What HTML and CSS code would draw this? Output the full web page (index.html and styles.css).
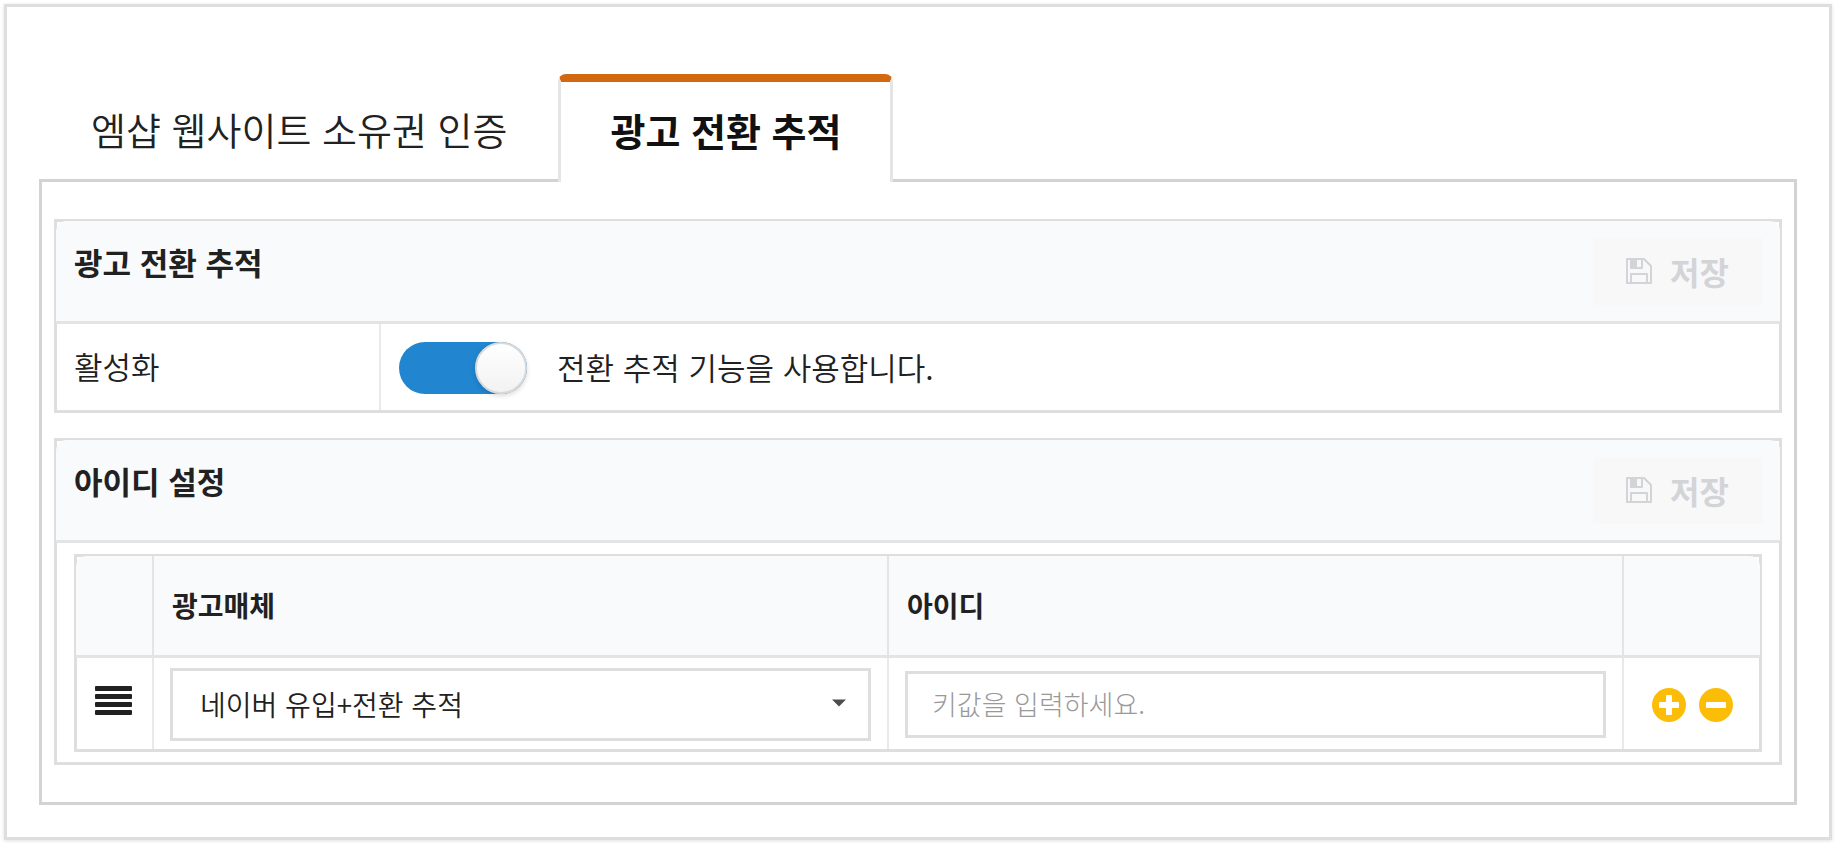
FILE: index.html
```
<!DOCTYPE html>
<html lang="ko">
<head>
    <meta charset="UTF-8">
    <meta name="viewport" content="width=device-width, initial-scale=1.0">
    <title>광고 전환 추적</title>
    <link rel="stylesheet" href="styles.css">
</head>
<body>
    <main class="card">
        <nav class="tabs">
            <a class="tab" href="#site">엠샵 웹사이트 소유권 인증</a>
            <a class="tab active" href="#tracking">광고 전환 추적</a>
        </nav>

        <div class="panel" id="tracking">
            <section class="section">
                <div class="section-head">
                    <h2>광고 전환 추적</h2>
                    <button class="save" type="button" disabled>
                        <svg class="save-icon" viewBox="0 0 26 26" fill="none" stroke="currentColor" stroke-width="2" stroke-linejoin="round">
                            <path d="M1 1H18L25 8V25H1Z"/>
                            <path d="M5 25V16H21V25"/>
                            <path d="M5 1V10H16V1"/>
                            <path d="M5 1H11V10H5Z" fill="currentColor" stroke="none"/>
                        </svg>
                        저장
                    </button>
                </div>
                <div class="field">
                    <label class="field-name" for="enabled">활성화</label>
                    <div class="field-value">
                        <input class="toggle" type="checkbox" id="enabled" checked>
                        <label for="enabled">전환 추적 기능을 사용합니다.</label>
                    </div>
                </div>
            </section>

            <section class="section">
                <div class="section-head">
                    <h2>아이디 설정</h2>
                    <button class="save" type="button" disabled>
                        <svg class="save-icon" viewBox="0 0 26 26" fill="none" stroke="currentColor" stroke-width="2" stroke-linejoin="round">
                            <path d="M1 1H18L25 8V25H1Z"/>
                            <path d="M5 25V16H21V25"/>
                            <path d="M5 1V10H16V1"/>
                            <path d="M5 1H11V10H5Z" fill="currentColor" stroke="none"/>
                        </svg>
                        저장
                    </button>
                </div>
                <div class="section-body">
                    <div class="table-box">
                        <table class="id-table">
                            <thead>
                                <tr>
                                    <th class="col-sort"></th>
                                    <th id="media-label">광고매체</th>
                                    <th id="id-label">아이디</th>
                                    <th class="col-action"></th>
                                </tr>
                            </thead>
                            <tbody>
                                <tr>
                                    <td class="col-sort">
                                        <svg class="sort-icon" viewBox="0 0 37 29" fill="#212121">
                                            <rect width="37" height="5" rx="1"/>
                                            <rect y="8" width="37" height="5" rx="1"/>
                                            <rect y="16" width="37" height="5" rx="1"/>
                                            <rect y="24" width="37" height="5" rx="1"/>
                                        </svg>
                                    </td>
                                    <td>
                                        <div class="select-box">
                                            <select aria-labelledby="media-label">
                                                <option>네이버 유입+전환 추적</option>
                                            </select>
                                            <svg class="caret" viewBox="0 0 14 8"><path d="M0 0.5H14L7 7.5Z" fill="#4d4d4d"/></svg>
                                        </div>
                                    </td>
                                    <td>
                                        <input class="text" type="text" placeholder="키값을 입력하세요." aria-labelledby="id-label">
                                    </td>
                                    <td class="col-action">
                                        <div class="actions">
                                            <button class="round" type="button" aria-label="추가">
                                                <svg viewBox="0 0 34 34">
                                                    <circle cx="17" cy="17" r="17" fill="#fbbd08"/>
                                                    <rect x="7" y="14" width="20" height="6" rx="1" fill="#fff"/>
                                                    <rect x="14" y="7" width="6" height="20" rx="1" fill="#fff"/>
                                                </svg>
                                            </button>
                                            <button class="round" type="button" aria-label="삭제">
                                                <svg viewBox="0 0 34 34">
                                                    <circle cx="17" cy="17" r="17" fill="#fbbd08"/>
                                                    <rect x="7" y="14" width="20" height="6" rx="1" fill="#fff"/>
                                                </svg>
                                            </button>
                                        </div>
                                    </td>
                                </tr>
                            </tbody>
                        </table>
                    </div>
                </div>
            </section>
        </div>
    </main>
</body>
</html>
```
FILE: styles.css
```
*,
*::before {
    box-sizing: border-box;
}

body {
    margin: 0;
    padding: 4px 3px 3px 4px;
    background-color: #fff;
    color: #212121;
    font-family: "Noto Sans CJK KR", sans-serif;
    font-size: 31px;
    font-weight: 350;
    line-height: 44px;
}

button,
input,
select {
    margin: 0;
    font-family: inherit;
    color: inherit;
}

svg {
    display: block;
}

.card {
    padding: 67px 32px 32px;
    border: 3px solid #dedede;
    box-shadow: 0 1px 4px rgba(0, 0, 0, 0.12);
}

/* Tabs */
.tabs {
    display: flex;
    align-items: stretch;
    margin-bottom: -3px;
}

.tab {
    padding: 25px 48px 31px 49px;
    border: 3px solid transparent;
    border-top-width: 8px;
    border-bottom: 0;
    color: #212121;
    font-size: 38px;
    text-decoration: none;
}

.tab.active {
    position: relative;
    padding-top: 26px;
    padding-bottom: 30px;
    background-color: #fff;
    border-color: #d26911 #e5e5e5;
    border-radius: 8px 8px 0 0;
    color: #111;
    font-weight: 700;
}

.panel {
    display: flex;
    flex-direction: column;
    gap: 25px;
    padding: 37px 12px;
    border: 3px solid #d3d3d3;
}

/* Sections */
.section {
    border: 3px solid #dedede;
}

.section-head {
    display: flex;
    justify-content: space-between;
    align-items: flex-start;
    margin: -1px -1px 0;
    padding: 17px 17px 16px 18px;
    background-color: #f9fafb;
    border-bottom: 3px solid #e3e4e4;
    border-radius: 10px 10px 0 0;
}

h2 {
    margin: 0;
    padding-top: 2px;
    font-size: 31px;
    font-weight: 700;
    line-height: 44px;
}

.save {
    display: flex;
    align-items: center;
    gap: 18px;
    height: 67px;
    padding: 0 34px 2px 33px;
    border: 0;
    background-color: #f8f8f8;
    color: #d3d4d8;
    font-size: 32px;
    font-weight: 700;
}

.save-icon {
    width: 26px;
    height: 26px;
}

.field {
    display: flex;
}

.field-name {
    width: 324px;
    padding: 20px 17px 22px;
    border-right: 2px solid #e8e9e9;
}

.field-value {
    display: flex;
    align-items: center;
    gap: 30px;
    padding: 18px 18px 16px;
}

.field-value label {
    padding-bottom: 2px;
}

.toggle {
    appearance: none;
    display: flex;
    justify-content: flex-end;
    width: 128px;
    height: 52px;
    border-radius: 26px;
    background-color: #2185d0;
}

.toggle:not(:checked) {
    justify-content: flex-start;
    background-color: #e0e0e0;
}

.toggle::before {
    content: "";
    width: 52px;
    height: 52px;
    border: 2px solid #d9d9d9;
    border-radius: 50%;
    background: linear-gradient(#fff, #f2f2f2);
    box-shadow: 0 2px 5px rgba(0, 0, 0, 0.15);
}

/* ID table */
.section-body {
    padding: 11px 17px 10px;
}

.table-box {
    border: 3px solid #dedede;
}

.id-table {
    width: calc(100% + 2px);
    margin: -1px -1px 0;
    border-spacing: 0;
    table-layout: fixed;
}

.id-table th {
    height: 102px;
    padding: 0 18px 2px;
    background-color: #f9fafb;
    border-right: 2px solid #e3e4e4;
    border-bottom: 3px solid #e3e4e4;
    font-size: 28px;
    font-weight: 700;
    text-align: left;
}

.id-table td {
    padding: 10px 16px 8px;
    border-right: 2px solid #e8e9e9;
}

.id-table th:first-child {
    border-top-left-radius: 10px;
}

.id-table th:last-child {
    border-right: 0;
    border-top-right-radius: 10px;
}

.id-table td:last-child {
    border-right: 0;
}

.id-table .col-sort {
    width: 78px;
}

.id-table td.col-sort {
    padding: 6px 18px 12px 16px;
}

.id-table .col-action {
    width: 136px;
}

.sort-icon {
    width: 37px;
    height: 29px;
    margin: 0 auto;
}

.select-box {
    position: relative;
}

.select-box select {
    appearance: none;
    display: block;
    width: 100%;
    height: 73px;
    padding: 0 60px 2px 27px;
    border: 3px solid #dedede;
    border-radius: 0;
    background-color: #fff;
    font-size: 28px;
    font-weight: 350;
}

.caret {
    position: absolute;
    top: 31px;
    right: 25px;
    width: 14px;
    height: 8px;
    pointer-events: none;
}

.text {
    display: block;
    width: 100%;
    height: 67px;
    padding: 0 24px 2px;
    border: 3px solid #dedede;
    background-color: #fff;
    font-size: 27px;
    font-weight: 300;
}

.text::placeholder {
    color: #999;
}

.actions {
    display: flex;
    justify-content: center;
    gap: 13px;
}

.round {
    width: 34px;
    height: 34px;
    padding: 0;
    border: 0;
    background: none;
    cursor: pointer;
}
```
